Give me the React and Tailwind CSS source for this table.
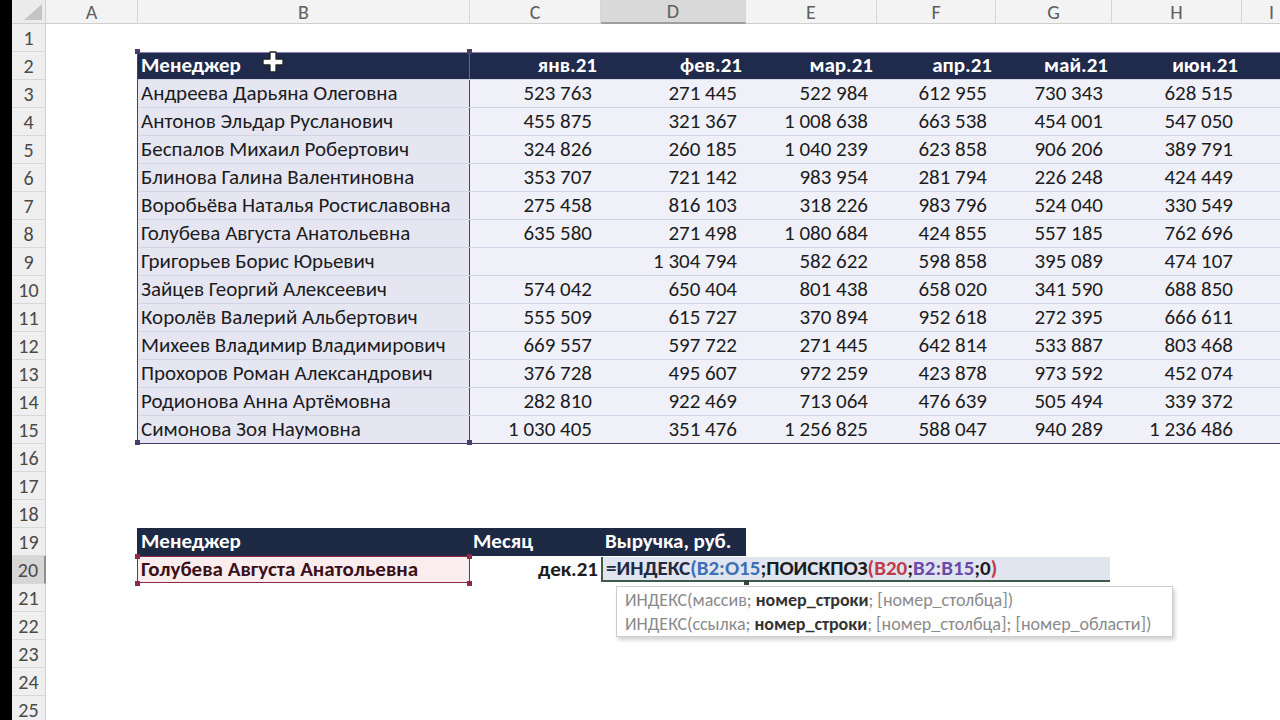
import React from 'react';

const COLS = [
  { key: 'A', w: 92 },
  { key: 'B', w: 332 },
  { key: 'C', w: 131 },
  { key: 'D', w: 145 },
  { key: 'E', w: 131 },
  { key: 'F', w: 119 },
  { key: 'G', w: 116 },
  { key: 'H', w: 130 },
  { key: 'I', w: 60 },
];

const MONTHS = ['янв.21', 'фев.21', 'мар.21', 'апр.21', 'май.21', 'июн.21'];
const NUM_W = [131, 145, 131, 119, 116, 130];

const DATA = [
  ['Андреева Дарьяна Олеговна', '523 763', '271 445', '522 984', '612 955', '730 343', '628 515'],
  ['Антонов Эльдар Русланович', '455 875', '321 367', '1 008 638', '663 538', '454 001', '547 050'],
  ['Беспалов Михаил Робертович', '324 826', '260 185', '1 040 239', '623 858', '906 206', '389 791'],
  ['Блинова Галина Валентиновна', '353 707', '721 142', '983 954', '281 794', '226 248', '424 449'],
  ['Воробьёва Наталья Ростиславовна', '275 458', '816 103', '318 226', '983 796', '524 040', '330 549'],
  ['Голубева Августа Анатольевна', '635 580', '271 498', '1 080 684', '424 855', '557 185', '762 696'],
  ['Григорьев Борис Юрьевич', '', '1 304 794', '582 622', '598 858', '395 089', '474 107'],
  ['Зайцев Георгий Алексеевич', '574 042', '650 404', '801 438', '658 020', '341 590', '688 850'],
  ['Королёв Валерий Альбертович', '555 509', '615 727', '370 894', '952 618', '272 395', '666 611'],
  ['Михеев Владимир Владимирович', '669 557', '597 722', '271 445', '642 814', '533 887', '803 468'],
  ['Прохоров Роман Александрович', '376 728', '495 607', '972 259', '423 878', '973 592', '452 074'],
  ['Родионова Анна Артёмовна', '282 810', '922 469', '713 064', '476 639', '505 494', '339 372'],
  ['Симонова Зоя Наумовна', '1 030 405', '351 476', '1 256 825', '588 047', '940 289', '1 236 486'],
];

const ROWS = Array.from({ length: 25 }, (_, i) => i + 1);

// range-reference corner handles
const HANDLES = [
  { x: 135, y: 49, c: 'bg-[#4a3d6a]' },
  { x: 467, y: 49, c: 'bg-[#4a3d6a]' },
  { x: 135, y: 440, c: 'bg-[#4a3d6a]' },
  { x: 467, y: 440, c: 'bg-[#4a3d6a]' },
  { x: 135, y: 554, c: 'bg-[#8e2a48]' },
  { x: 467, y: 554, c: 'bg-[#8e2a48]' },
  { x: 135, y: 581, c: 'bg-[#8e2a48]' },
  { x: 467, y: 581, c: 'bg-[#8e2a48]' },
  { x: 744, y: 580, c: 'bg-[#2f4a3c]' },
];

const Cursor = () => (
  <svg width="22" height="22" viewBox="0 0 22 22" className="absolute left-[262px] top-[51px]">
    <path d="M8 1h6v7h7v6h-7v7H8v-7H1V8h7z" fill="#fff" stroke="#222" strokeWidth="1.3" strokeLinejoin="round" />
  </svg>
);

export default function App() {
  return (
    <div className="relative w-[1280px] h-[720px] overflow-hidden bg-white font-['Carlito','Noto_Sans',sans-serif] text-[#1c1c1c]">
      {/* column headers */}
      <div className="flex h-[24px]">
        <div className="w-[12px] bg-black shrink-0" />
        <div className="w-[34px] shrink-0 bg-[#ececec] border-r border-b border-[#cfcfcf] flex items-end justify-end p-[3px]">
          <svg width="18" height="16" viewBox="0 0 18 16">
            <path d="M18 0v16H0z" fill="#c4c4c4" />
          </svg>
        </div>
        {COLS.map((c) => (
          <div
            key={c.key}
            style={{ width: c.w }}
            className={`shrink-0 flex items-center justify-center text-[20px] text-[#5f5f5f] border-r border-[#d6d6d6] ${
              c.key === 'D' ? 'bg-[#d9d9d9] border-b-2 border-b-[#9e9e9e]' : 'bg-[#f3f3f3] border-b border-b-[#cfcfcf]'
            }`}
          >
            {c.key}
          </div>
        ))}
      </div>

      <div className="flex">
        <div className="w-[12px] bg-black shrink-0 h-[700px]" />
        {/* row numbers */}
        <div className="w-[34px] shrink-0 flex flex-col">
          {ROWS.map((r) => (
            <div
              key={r}
              className={`h-[28px] shrink-0 flex items-center justify-center text-[20px] text-[#4a4a4a] border-b border-[#d8d8d8] ${
                r === 20 ? 'bg-[#d6d6d6] border-r-2 border-r-[#8f8f8f]' : 'bg-[#efefef] border-r border-r-[#cfcfcf]'
              }`}
            >
              {r}
            </div>
          ))}
        </div>

        {/* sheet body */}
        <div className="flex-1 flex flex-col">
          <div className="h-[28px]" />

          {/* main table B2:H15 */}
          <div className="ml-[91px] h-[392px] border-l border-t border-b-2 border-[#4a3d6a] border-t-[#8c80b0] flex flex-col">
            <div className="flex h-[26px] shrink-0 bg-[#1f2a4c] text-white font-bold text-[21px]">
              <div className="w-[332px] shrink-0 pl-[3px] flex items-center border-r border-[#6f5f9a]">Менеджер</div>
              {MONTHS.map((m, i) => (
                <div key={m} style={{ width: NUM_W[i] }} className="shrink-0 flex items-center justify-end pr-[4px]">
                  {m}
                </div>
              ))}
              <div className="flex-1" />
            </div>
            {DATA.map((row, ri) => (
              <div key={ri} className="flex h-[28px] shrink-0 text-[21px] border-t border-[#d2d5e4]">
                <div className="w-[332px] shrink-0 pl-[3px] flex items-center bg-[#e6e6f3] border-r border-[#4a3d6a] whitespace-nowrap">
                  {row[0]}
                </div>
                {row.slice(1).map((v, i) => (
                  <div
                    key={i}
                    style={{ width: NUM_W[i] }}
                    className="shrink-0 flex items-center justify-end pr-[9px] bg-[#eff0f8] whitespace-nowrap"
                  >
                    {v}
                  </div>
                ))}
                <div className="flex-1 bg-[#eff0f8]" />
              </div>
            ))}
          </div>

          <div className="h-[84px]" />

          {/* lookup table */}
          <div className="ml-[91px] flex h-[28px] items-stretch">
            <div className="flex w-[609px] bg-[#1e2944] text-white font-bold text-[21px]">
              <div className="w-[333px] pl-[4px] flex items-center">Менеджер</div>
              <div className="w-[131px] pl-[3px] flex items-center">Месяц</div>
              <div className="w-[145px] pl-[4px] flex items-center whitespace-nowrap">Выручка, руб.</div>
            </div>
          </div>
          <div className="ml-[91px] flex h-[28px] text-[21px] font-bold">
            <div className="w-[333px] shrink-0 h-[27px] bg-[#fbecee] border border-[#8e2a48] pl-[3px] flex items-center text-[#3a1018]">
              Голубева Августа Анатольевна
            </div>
            <div className="w-[131px] shrink-0 flex items-center justify-end pr-[3px]">дек.21</div>
            <div className="flex h-[25px] mt-[1px]">
              <div className="w-[509px] bg-[#e1e5ef] border-l-2 border-b-2 border-[#3f5b4c] pl-[3px] flex items-center whitespace-nowrap">
                <span className="text-[#1f2a44]">=ИНДЕКС</span>
                <span className="text-[#3d6fb5]">(B2:O15</span>
                <span>;ПОИСКПОЗ</span>
                <span className="text-[#c23b4a]">(B20</span>
                <span>;</span>
                <span className="text-[#6b4aa8]">B2:B15</span>
                <span>;0</span>
                <span className="text-[#c23b4a]">)</span>
              </div>
            </div>
          </div>
        </div>
      </div>

      {HANDLES.map((h, i) => (
        <div key={i} style={{ left: h.x, top: h.y }} className={`absolute w-[5px] h-[5px] ${h.c}`} />
      ))}

      {/* function tooltip */}
      <div className="absolute left-[616px] top-[586px] w-[557px] h-[51px] bg-white border border-[#cdcdcd] shadow-[2px_3px_4px_rgba(0,0,0,0.18)] px-[8px] py-[1px] text-[18px] text-[#8a8a8a] leading-[24px] whitespace-nowrap">
        <div>
          ИНДЕКС(массив; <b className="text-[#333]">номер_строки</b>; [номер_столбца])
        </div>
        <div>
          ИНДЕКС(ссылка; <b className="text-[#333]">номер_строки</b>; [номер_столбца]; [номер_области])
        </div>
      </div>

      <Cursor />
    </div>
  );
}
